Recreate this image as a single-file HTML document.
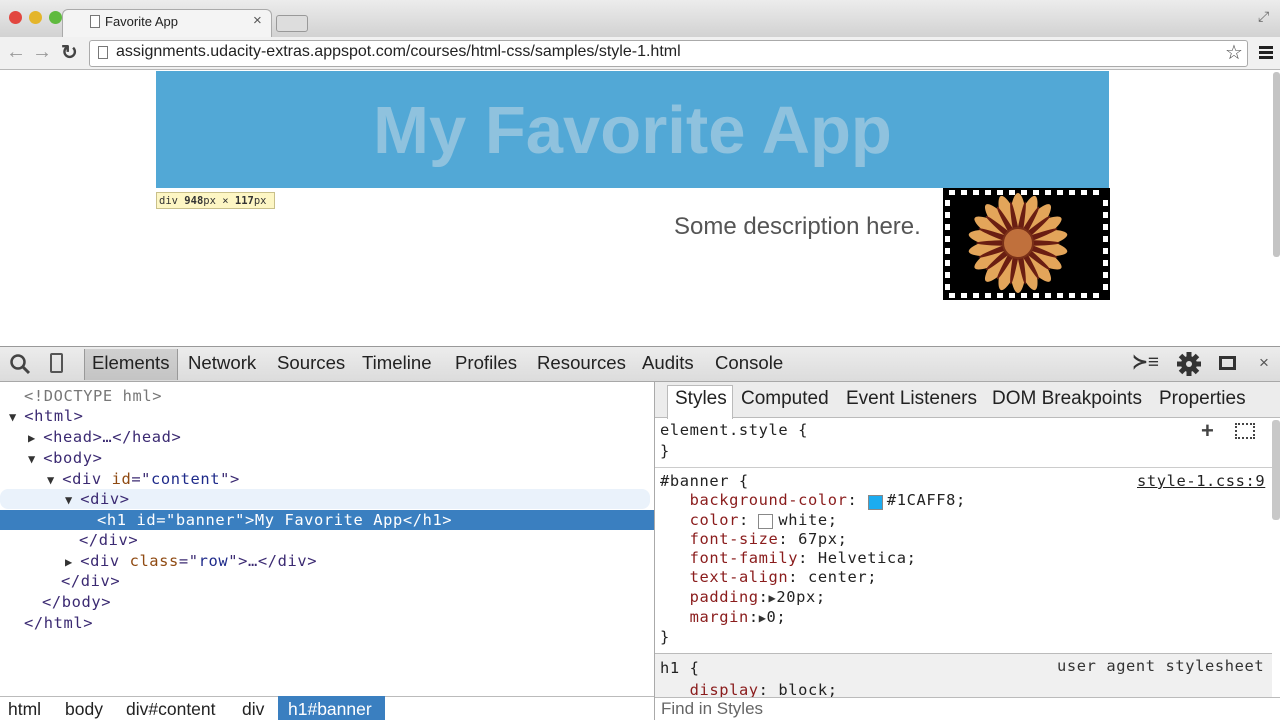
<!DOCTYPE html>
<html><head><meta charset="utf-8"><style>
*{margin:0;padding:0;box-sizing:border-box}
body{width:1280px;height:720px;overflow:hidden;position:relative;background:#fff;font-family:"Liberation Sans",sans-serif}
.abs{position:absolute}
.mono{font-family:"DejaVu Sans Mono","Liberation Mono",monospace;font-size:15.4px;letter-spacing:0.6px;white-space:pre}
.t{color:#3b2a72}.an{color:#8f4a12}.av{color:#1e2a8a}.g{color:#777}
.tri{color:#333;font-size:12px}
.tr{color:#333;font-size:12px;letter-spacing:0;margin-right:8px}
.prop{color:#8a1c1c}
.tab{position:absolute;top:352px;font-size:18.6px;color:#222}
.rt{position:absolute;top:388px;font-size:19px;color:#222}
.bc{position:absolute;top:699px;font-size:17.5px;color:#222}
.ln{position:absolute;line-height:20px}
</style></head><body>
<!-- title bar -->
<div class="abs" style="left:0;top:0;width:1280px;height:37px;background:linear-gradient(#ececec,#d2d2d2)"></div>
<div class="abs" style="left:9px;top:11px;width:13px;height:13px;border-radius:50%;background:#e2463f"></div>
<div class="abs" style="left:29px;top:11px;width:13px;height:13px;border-radius:50%;background:#e4b52b"></div>
<div class="abs" style="left:49px;top:11px;width:13px;height:13px;border-radius:50%;background:#5fba3e"></div>
<div class="abs" style="left:62px;top:9px;width:210px;height:30px;background:#f4f4f4;border:1px solid #aaa;border-bottom:none;border-radius:6px 6px 0 0"></div>
<div class="abs" style="left:90px;top:15px;width:10px;height:13px;border:1px solid #777;background:#fff"></div>
<div class="abs" style="left:105px;top:14px;font-size:13px;color:#222">Favorite App</div>
<div class="abs" style="left:253px;top:12px;font-size:15px;color:#555">×</div>
<div class="abs" style="left:276px;top:15px;width:32px;height:17px;border:1px solid #999;border-radius:3px;background:#ddd"></div>
<div class="abs" style="left:1258px;top:8px;font-size:14px;color:#666">⤢</div>
<!-- toolbar -->
<div class="abs" style="left:0;top:37px;width:1280px;height:33px;background:#f1f1f1;border-bottom:1px solid #b8b8b8"></div>
<div class="abs" style="left:6px;top:41px;font-size:20px;color:#999">←</div>
<div class="abs" style="left:32px;top:41px;font-size:20px;color:#999">→</div>
<div class="abs" style="left:61px;top:40px;font-size:20px;color:#444;font-weight:bold">↻</div>
<div class="abs" style="left:89px;top:40px;width:1159px;height:27px;background:#fff;border:1px solid #aaa;border-radius:3px"></div>
<div class="abs" style="left:98px;top:46px;width:10px;height:13px;border:1px solid #777"></div>
<div class="abs" style="left:116px;top:43px;font-size:16px;color:#222">assignments.udacity-extras.appspot.com/courses/html-css/samples/style-1.html</div>
<div class="abs" style="left:1225px;top:40px;font-size:20px;color:#444">☆</div>
<div class="abs" style="left:1259px;top:46px;width:14px;height:3px;background:#222;box-shadow:0 5px 0 #222,0 10px 0 #222"></div>
<!-- page -->
<div class="abs" style="left:156px;top:71px;width:953px;height:117px;background:#52a8d6"></div>
<div class="abs" style="left:156px;top:92px;width:953px;text-align:center;font-size:67px;font-weight:bold;color:#8fc2de">My Favorite App</div>
<div class="abs" style="left:156px;top:192px;width:119px;height:17px;background:#fdf6c4;border:1px solid #c9c08a;font-family:'DejaVu Sans Mono',monospace;font-size:10.5px;color:#333;padding:2px 2px;white-space:nowrap">div <b>948</b>px × <b>117</b>px</div>
<div class="abs" style="left:674px;top:213px;font-size:24px;color:#555">Some description here.</div>
<svg class="abs" style="left:943px;top:188px" width="167" height="112" viewBox="0 0 167 112">
<rect width="167" height="112" fill="#000"/>
<g fill="#fff">
<rect x="6" y="2" width="6" height="5"/><rect x="18" y="2" width="6" height="5"/><rect x="30" y="2" width="6" height="5"/><rect x="42" y="2" width="6" height="5"/><rect x="54" y="2" width="6" height="5"/><rect x="66" y="2" width="6" height="5"/><rect x="78" y="2" width="6" height="5"/><rect x="90" y="2" width="6" height="5"/><rect x="102" y="2" width="6" height="5"/><rect x="114" y="2" width="6" height="5"/><rect x="126" y="2" width="6" height="5"/><rect x="138" y="2" width="6" height="5"/><rect x="150" y="2" width="6" height="5"/>
<rect x="6" y="105" width="6" height="5"/><rect x="18" y="105" width="6" height="5"/><rect x="30" y="105" width="6" height="5"/><rect x="42" y="105" width="6" height="5"/><rect x="54" y="105" width="6" height="5"/><rect x="66" y="105" width="6" height="5"/><rect x="78" y="105" width="6" height="5"/><rect x="90" y="105" width="6" height="5"/><rect x="102" y="105" width="6" height="5"/><rect x="114" y="105" width="6" height="5"/><rect x="126" y="105" width="6" height="5"/><rect x="138" y="105" width="6" height="5"/><rect x="150" y="105" width="6" height="5"/>
<rect x="2" y="12" width="5" height="6"/><rect x="2" y="24" width="5" height="6"/><rect x="2" y="36" width="5" height="6"/><rect x="2" y="48" width="5" height="6"/><rect x="2" y="60" width="5" height="6"/><rect x="2" y="72" width="5" height="6"/><rect x="2" y="84" width="5" height="6"/><rect x="2" y="96" width="5" height="6"/>
<rect x="160" y="12" width="5" height="6"/><rect x="160" y="24" width="5" height="6"/><rect x="160" y="36" width="5" height="6"/><rect x="160" y="48" width="5" height="6"/><rect x="160" y="60" width="5" height="6"/><rect x="160" y="72" width="5" height="6"/><rect x="160" y="84" width="5" height="6"/><rect x="160" y="96" width="5" height="6"/>
</g>
<g transform="translate(75,55)">
<g fill="#e3a55a">
<ellipse rx="10" ry="50" transform="rotate(0)"/><ellipse rx="10" ry="50" transform="rotate(20)"/><ellipse rx="10" ry="50" transform="rotate(40)"/><ellipse rx="10" ry="50" transform="rotate(60)"/><ellipse rx="10" ry="50" transform="rotate(80)"/><ellipse rx="10" ry="50" transform="rotate(100)"/><ellipse rx="10" ry="50" transform="rotate(120)"/><ellipse rx="10" ry="50" transform="rotate(140)"/><ellipse rx="10" ry="50" transform="rotate(160)"/>
</g>
<g fill="#6a1e12">
<ellipse rx="3" ry="42" transform="rotate(10)"/><ellipse rx="3" ry="42" transform="rotate(30)"/><ellipse rx="3" ry="42" transform="rotate(50)"/><ellipse rx="3" ry="42" transform="rotate(70)"/><ellipse rx="3" ry="42" transform="rotate(90)"/><ellipse rx="3" ry="42" transform="rotate(110)"/><ellipse rx="3" ry="42" transform="rotate(130)"/><ellipse rx="3" ry="42" transform="rotate(150)"/><ellipse rx="3" ry="42" transform="rotate(170)"/>
</g>
<circle r="15" fill="#c0703c"/><circle r="15" fill="none" stroke="#7a3018" stroke-width="2"/>
</g>
</svg>
<div class="abs" style="left:1273px;top:72px;width:7px;height:185px;background:#c4c4c4;border-radius:3px"></div>
<!-- devtools toolbar -->
<div class="abs" style="left:0;top:346px;width:1280px;height:36px;background:linear-gradient(#ececec,#dcdcdc);border-top:1px solid #999;border-bottom:1px solid #a8a8a8"></div>
<svg class="abs" style="left:9px;top:353px" width="24" height="22"><circle cx="9" cy="9" r="6.5" fill="none" stroke="#444" stroke-width="2.5"/><line x1="14" y1="14" x2="20" y2="20" stroke="#444" stroke-width="3"/></svg>
<div class="abs" style="left:50px;top:353px;width:13px;height:20px;border:2px solid #555;border-radius:2px"></div>
<div class="abs" style="left:84px;top:349px;width:94px;height:31px;background:linear-gradient(#d0d0d0,#c4c4c4);border-left:1px solid #999;border-right:1px solid #999"></div>
<div class="tab" style="left:92px">Elements</div>
<div class="tab" style="left:188px">Network</div>
<div class="tab" style="left:277px">Sources</div>
<div class="tab" style="left:362px">Timeline</div>
<div class="tab" style="left:455px">Profiles</div>
<div class="tab" style="left:537px">Resources</div>
<div class="tab" style="left:642px">Audits</div>
<div class="tab" style="left:715px">Console</div>
<div class="abs" style="left:1132px;top:351px;font-size:19px;color:#333;font-weight:bold">≻≡</div>
<svg class="abs" style="left:1176px;top:351px" width="26" height="26" viewBox="-13 -13 26 26"><g fill="#333"><circle r="8"/><rect x="-2.5" y="-12" width="5" height="24"/><rect x="-2.5" y="-12" width="5" height="24" transform="rotate(45)"/><rect x="-2.5" y="-12" width="5" height="24" transform="rotate(90)"/><rect x="-2.5" y="-12" width="5" height="24" transform="rotate(135)"/></g><circle r="3" fill="#e0e0e0"/></svg>
<div class="abs" style="left:1219px;top:356px;width:17px;height:14px;border:3px solid #333"></div>
<div class="abs" style="left:1259px;top:353px;font-size:17px;color:#555">×</div>
<!-- left pane -->
<div class="abs" style="left:654px;top:382px;width:1px;height:338px;background:#aaa"></div>
<div class="abs" style="left:0;top:489px;width:650px;height:20px;background:#eaf2fb;border-radius:8px"></div>
<div class="abs" style="left:0;top:510px;width:654px;height:20px;background:#3a7fc0"></div>
<div class="mono">
<div class="ln" style="left:24px;top:386px"><span class="g">&lt;!DOCTYPE hml&gt;</span></div>
<div class="ln" style="left:9px;top:406px"><span class="tr">▼</span><span class="t">&lt;html&gt;</span></div>
<div class="ln" style="left:28px;top:427px"><span class="tr">▶</span><span class="t">&lt;head&gt;…&lt;/head&gt;</span></div>
<div class="ln" style="left:28px;top:448px"><span class="tr">▼</span><span class="t">&lt;body&gt;</span></div>
<div class="ln" style="left:47px;top:469px"><span class="tr">▼</span><span class="t">&lt;div </span><span class="an">id</span><span class="t">="</span><span class="av">content</span><span class="t">"&gt;</span></div>
<div class="ln" style="left:65px;top:489px"><span class="tr">▼</span><span class="t">&lt;div&gt;</span></div>
<div class="ln" style="left:97px;top:510px;color:#fff">&lt;h1 id="banner"&gt;My Favorite App&lt;/h1&gt;</div>
<div class="ln" style="left:79px;top:530px"><span class="t">&lt;/div&gt;</span></div>
<div class="ln" style="left:65px;top:551px"><span class="tr">▶</span><span class="t">&lt;div </span><span class="an">class</span><span class="t">="</span><span class="av">row</span><span class="t">"&gt;…&lt;/div&gt;</span></div>
<div class="ln" style="left:61px;top:571px"><span class="t">&lt;/div&gt;</span></div>
<div class="ln" style="left:42px;top:592px"><span class="t">&lt;/body&gt;</span></div>
<div class="ln" style="left:24px;top:613px"><span class="t">&lt;/html&gt;</span></div>
</div>
<!-- breadcrumb -->
<div class="abs" style="left:0;top:696px;width:654px;height:24px;background:#fff;border-top:1px solid #bbb"></div>
<div class="abs" style="left:278px;top:696px;width:107px;height:24px;background:#3a7fc0"></div>
<div class="bc" style="left:8px">html</div>
<div class="bc" style="left:65px">body</div>
<div class="bc" style="left:126px">div#content</div>
<div class="bc" style="left:242px">div</div>
<div class="bc" style="left:288px;color:#fff">h1#banner</div>
<!-- right pane -->
<div class="abs" style="left:655px;top:382px;width:625px;height:36px;background:#ececec;border-bottom:1px solid #bbb"></div>
<div class="abs" style="left:667px;top:385px;width:66px;height:34px;background:#fff;border:1px solid #bbb;border-bottom:none"></div>
<div class="rt" style="left:675px">Styles</div>
<div class="rt" style="left:741px">Computed</div>
<div class="rt" style="left:846px">Event Listeners</div>
<div class="rt" style="left:992px">DOM Breakpoints</div>
<div class="rt" style="left:1159px">Properties</div>
<div class="abs" style="left:1272px;top:420px;width:8px;height:100px;background:#c8c8c8;border-radius:3px"></div>
<div class="abs mono" style="left:660px;top:420px;line-height:20.5px;color:#222">element.style {
}</div>
<div class="abs" style="left:1201px;top:418px;font-size:22px;color:#444;font-weight:bold">+</div>
<div class="abs" style="left:1235px;top:423px;width:20px;height:16px;border:2px dotted #444"></div>
<div class="abs" style="left:655px;top:467px;width:617px;height:1px;background:#ccc"></div>
<div class="abs mono" style="left:660px;top:472px;line-height:19.3px;color:#222">#banner {
   <span class="prop">background-color</span>:   #1CAFF8;
   <span class="prop">color</span>:   white;
   <span class="prop">font-size</span>: 67px;
   <span class="prop">font-family</span>: Helvetica;
   <span class="prop">text-align</span>: center;
   <span class="prop">padding</span>:<span class="tri">▶</span>20px;
   <span class="prop">margin</span>:<span class="tri">▶</span>0;
}</div>
<div class="abs" style="left:868px;top:495px;width:15px;height:15px;background:#1cacf0;border:1px solid #888"></div>
<div class="abs" style="left:758px;top:514px;width:15px;height:15px;background:#fff;border:1px solid #888"></div>
<div class="abs mono" style="left:1137px;top:472px;color:#222;text-decoration:underline">style-1.css:9</div>
<div class="abs" style="left:655px;top:653px;width:617px;height:44px;background:#f0f0f0;border-top:1px solid #bbb"></div>
<div class="abs mono" style="left:660px;top:657px;line-height:22px;color:#222">h1 {
   <span class="prop">display</span>: block;</div>
<div class="abs mono" style="left:1057px;top:657px;color:#333">user agent stylesheet</div>
<div class="abs" style="left:655px;top:697px;width:625px;height:23px;background:#fff;border-top:1px solid #bbb"></div>
<div class="abs" style="left:661px;top:699px;font-size:17px;color:#666">Find in Styles</div>
</body></html>
